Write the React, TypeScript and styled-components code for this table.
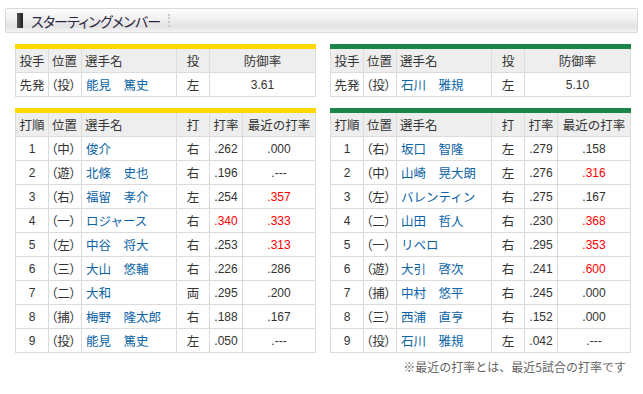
import React from 'react'
import styled, { createGlobalStyle } from 'styled-components'

type Team = 'home' | 'away'

type Pitcher = {
  pos: string
  name: string
  hand: string
  era: string
}

type Batter = {
  order: number
  pos: string
  name: string
  hand: string
  avg: string
  recent: string
  hotAvg?: boolean
  hotRecent?: boolean
}

const pitchers: Record<Team, Pitcher> = {
  home: { pos: '（投）', name: '能見　篤史', hand: '左', era: '3.61' },
  away: { pos: '（投）', name: '石川　雅規', hand: '左', era: '5.10' },
}

const lineups: Record<Team, Batter[]> = {
  home: [
    { order: 1, pos: '（中）', name: '俊介', hand: '右', avg: '.262', recent: '.000' },
    { order: 2, pos: '（遊）', name: '北條　史也', hand: '右', avg: '.196', recent: '.---' },
    { order: 3, pos: '（右）', name: '福留　孝介', hand: '左', avg: '.254', recent: '.357', hotRecent: true },
    { order: 4, pos: '（一）', name: 'ロジャース', hand: '右', avg: '.340', recent: '.333', hotAvg: true, hotRecent: true },
    { order: 5, pos: '（左）', name: '中谷　将大', hand: '右', avg: '.253', recent: '.313', hotRecent: true },
    { order: 6, pos: '（三）', name: '大山　悠輔', hand: '右', avg: '.226', recent: '.286' },
    { order: 7, pos: '（二）', name: '大和', hand: '両', avg: '.295', recent: '.200' },
    { order: 8, pos: '（捕）', name: '梅野　隆太郎', hand: '右', avg: '.188', recent: '.167' },
    { order: 9, pos: '（投）', name: '能見　篤史', hand: '左', avg: '.050', recent: '.---' },
  ],
  away: [
    { order: 1, pos: '（右）', name: '坂口　智隆', hand: '左', avg: '.279', recent: '.158' },
    { order: 2, pos: '（中）', name: '山崎　晃大朗', hand: '左', avg: '.276', recent: '.316', hotRecent: true },
    { order: 3, pos: '（左）', name: 'バレンティン', hand: '右', avg: '.275', recent: '.167' },
    { order: 4, pos: '（二）', name: '山田　哲人', hand: '右', avg: '.230', recent: '.368', hotRecent: true },
    { order: 5, pos: '（一）', name: 'リベロ', hand: '右', avg: '.295', recent: '.353', hotRecent: true },
    { order: 6, pos: '（遊）', name: '大引　啓次', hand: '右', avg: '.241', recent: '.600', hotRecent: true },
    { order: 7, pos: '（捕）', name: '中村　悠平', hand: '右', avg: '.245', recent: '.000' },
    { order: 8, pos: '（三）', name: '西浦　直亨', hand: '右', avg: '.152', recent: '.000' },
    { order: 9, pos: '（投）', name: '石川　雅規', hand: '左', avg: '.042', recent: '.---' },
  ],
}

const teamColor: Record<Team, string> = {
  home: '#ffd800',
  away: '#1b8549',
}

const GlobalStyle = createGlobalStyle`
  body {
    margin: 0;
    background: #fff;
    font-family: "Liberation Sans", "Noto Sans CJK JP", sans-serif;
    font-size: 12px;
    color: #333;
  }
`

export default function App() {
  return (
    <>
      <GlobalStyle />
      <Root>
        <Heading>
          <HeadingMark />
          <HeadingText>スターティングメンバー</HeadingText>
          <HeadingDots />
        </Heading>

        <Columns>
          {(['home', 'away'] as Team[]).map((team) => (
            <Table key={team} $team={team}>
              <colgroup>
                <col width={33} />
                <col width={33} />
                <col width={95} />
                <col width={33} />
                <col width={106} />
              </colgroup>
              <thead>
                <tr>
                  <Th $align="center">投手</Th>
                  <Th>位置</Th>
                  <Th>選手名</Th>
                  <Th $align="center">投</Th>
                  <Th $align="center">防御率</Th>
                </tr>
              </thead>
              <tbody>
                <tr>
                  <Td $align="center" $cjk>先発</Td>
                  <PosCell>{pitchers[team].pos}</PosCell>
                  <NameCell>{pitchers[team].name}</NameCell>
                  <Td $align="center" $cjk>{pitchers[team].hand}</Td>
                  <Td $align="center">{pitchers[team].era}</Td>
                </tr>
              </tbody>
            </Table>
          ))}
        </Columns>

        <Columns>
          {(['home', 'away'] as Team[]).map((team) => (
            <Table key={team} $team={team}>
              <colgroup>
                <col width={33} />
                <col width={33} />
                <col width={95} />
                <col width={33} />
                <col width={33} />
                <col width={73} />
              </colgroup>
              <thead>
                <tr>
                  <Th $align="center">打順</Th>
                  <Th>位置</Th>
                  <Th>選手名</Th>
                  <Th $align="center">打</Th>
                  <Th $align="center">打率</Th>
                  <Th $align="center">最近の打率</Th>
                </tr>
              </thead>
              <tbody>
                {lineups[team].map((b) => (
                  <tr key={b.order}>
                    <Td $align="center">{b.order}</Td>
                    <PosCell>{b.pos}</PosCell>
                    <NameCell>{b.name}</NameCell>
                    <Td $align="center" $cjk>{b.hand}</Td>
                    <Td $align="center" $hot={b.hotAvg}>{b.avg}</Td>
                    <Td $align="center" $hot={b.hotRecent}>{b.recent}</Td>
                  </tr>
                ))}
              </tbody>
            </Table>
          ))}
        </Columns>

        <Note>※最近の打率とは、最近5試合の打率です</Note>
      </Root>
    </>
  )
}

const Root = styled.div`
  width: 643px;
  padding-top: 8px;
`

const Heading = styled.div`
  display: flex;
  align-items: center;
  height: 23px;
  margin: 0 5px 11px;
  padding-left: 11px;
  border: 1px solid #d9d9d9;
  border-radius: 2px;
  background: linear-gradient(#fdfdfd 0%, #f0f0f0 45%, #e2e2e2 75%, #f4f4f4 100%);
`

const HeadingMark = styled.span`
  width: 6px;
  height: 15px;
  background: linear-gradient(90deg, #555, #222);
`

const HeadingText = styled.span`
  margin-left: 8px;
  font-family: "Noto Sans CJK JP", sans-serif;
  font-size: 14px;
  font-feature-settings: "palt";
  letter-spacing: -0.8px;
  color: #2a2640;
`

const HeadingDots = styled.span`
  height: 13px;
  margin-left: 8px;
  border-left: 2px dotted #c8c8c8;
`

const Columns = styled.div`
  display: flex;
  gap: 14px;
  padding-left: 15px;
  margin-bottom: 11px;
`

const Table = styled.table<{ $team: Team }>`
  width: 300px;
  table-layout: fixed;
  border-collapse: collapse;
  border-top: 5px solid ${(p) => teamColor[p.$team]};
`

const Th = styled.th<{ $align?: 'left' | 'center' }>`
  height: 23px;
  padding: 0 3px;
  border: 1px solid #dcdcdc;
  border-top: none;
  background: #eeeeee;
  font-family: "Noto Sans CJK JP", sans-serif;
  font-weight: normal;
  font-size: 12.5px;
  color: #333;
  text-align: ${(p) => p.$align ?? 'left'};
  white-space: nowrap;
  overflow: hidden;
`

const Td = styled.td<{ $align?: 'left' | 'center'; $hot?: boolean; $cjk?: boolean }>`
  height: 23px;
  padding: 0 3px;
  border: 1px solid #dcdcdc;
  font-size: 12px;
  ${(p) => (p.$cjk ? 'font-family: "Noto Sans CJK JP", sans-serif; font-size: 12.5px;' : '')}
  color: ${(p) => (p.$hot ? '#f00' : '#333')};
  text-align: ${(p) => p.$align ?? 'left'};
  white-space: nowrap;
  overflow: hidden;
`

const PosCell = styled(Td)`
  padding: 0 2px;
  font-family: "Noto Sans CJK JP", sans-serif;
  font-size: 12.5px;
  font-feature-settings: "palt";
`

const NameCell = styled(Td)`
  padding-left: 4px;
  color: #0b63a6;
  font-family: "Noto Sans CJK JP", sans-serif;
  font-size: 12.5px;
`

const Note = styled.div`
  width: 626px;
  margin-top: -6px;
  text-align: right;
  font-family: "Noto Sans CJK JP", sans-serif;
  font-size: 12px;
  color: #666;
`
